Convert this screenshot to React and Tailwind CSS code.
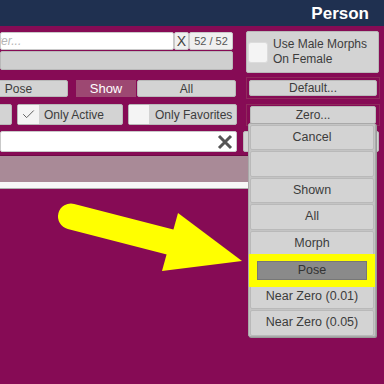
import { Check } from 'lucide-react';

const btn = 'flex items-center justify-center bg-[#d3d3d3] border border-[#b9b9b9] rounded-[2px] text-[#3c3c3c]';

function MenuItem({ label }) {
  return (
    <div className="h-[26.5px] px-[1px] py-[0.5px]">
      <div className={`${btn} h-full w-full text-[12.5px]`}>{label}</div>
    </div>
  );
}

export default function App() {
  const items = ['Cancel', '', 'Shown', 'All', 'Morph', 'Pose', 'Near Zero (0.01)', 'Near Zero (0.05)'];

  return (
    <div className="relative w-[384px] h-[384px] overflow-hidden bg-[#860b55] font-['Liberation_Sans',Arial,sans-serif] text-[12px] text-[#3c3c3c]">
      <div className="h-[26px] bg-[#1f3050] flex items-center justify-end pr-[15px]">
        <span className="text-white font-bold text-[17px] leading-none">Person</span>
      </div>

      <div className="flex">
        {/* left column */}
        <div className="w-[243px] flex flex-col pt-[6px]">
          <div className="flex h-[18px] w-[233px]">
            <div className="flex-1 bg-white border border-[#c9c9c9] rounded-[2px] flex items-center overflow-hidden">
              <span className="ml-[-16px] italic text-[#b4b4b4] whitespace-nowrap">Filter...</span>
            </div>
            <div className="w-[15px] bg-[#f0f0f0] border border-[#c9c9c9] rounded-[2px] flex items-center justify-center text-[14px] text-[#444]">X</div>
            <div className="w-[44px] bg-[#f0f0f0] border border-[#c9c9c9] rounded-[2px] flex items-center justify-center text-[11px] text-[#555]">52 / 52</div>
          </div>
          <div className="mt-[1px] h-[19px] w-[233px] bg-[#cfcfcf] border border-[#b9b9b9] rounded-[2px]" />

          <div className="mt-[10px] flex h-[17px]">
            <div className={`${btn} shrink-0 ml-[-31px] w-[99px]`}>Pose</div>
            <div className="shrink-0 ml-[8px] w-[60px] bg-[#9d4872] flex items-center justify-center text-white text-[13px]">Show</div>
            <div className={`${btn} shrink-0 ml-[1px] w-[99px]`}>All</div>
          </div>

          <div className="mt-[7px] flex h-[21px]">
            <div className={`${btn} shrink-0 ml-[-94px] w-[106px]`} />
            <div className="shrink-0 ml-[5px] w-[106px] flex bg-[#d3d3d3] border border-[#b9b9b9] rounded-[2px]">
              <div className="w-[21px] bg-[#f4f4f4] flex items-center justify-center">
                <Check size={15} strokeWidth={1.5} color="#555" />
              </div>
              <span className="ml-[5px] self-center text-[12px]">Only Active</span>
            </div>
            <div className="shrink-0 ml-[5px] w-[109px] flex bg-[#d3d3d3] border border-[#b9b9b9] rounded-[2px]">
              <div className="w-[20px] bg-[#f4f4f4]" />
              <span className="ml-[6px] self-center text-[12px]">Only Favorites</span>
            </div>
          </div>

          <div className="mt-[6px] h-[21px] w-[237px] bg-white border border-[#c9c9c9] rounded-[2px] flex items-center justify-end pr-[3px]">
            <svg width="16" height="16" viewBox="0 0 16 16">
              <path d="M2 2 L14 14 M14 2 L2 14" stroke="#555" strokeWidth="3" />
            </svg>
          </div>
        </div>

        {/* right column */}
        <div className="flex flex-col pt-[5px]">
          <div className="ml-[3px] w-[133px] h-[42px] flex items-center bg-[#d3d3d3] border border-[#b9b9b9] rounded-[2px]">
            <div className="ml-[1px] w-[20px] h-[21px] bg-[#f4f4f4] rounded-[3px] border border-[#dcdcdc]" />
            <span className="ml-[5px] leading-[15px] text-[12px]">Use Male Morphs<br />On Female</span>
          </div>
          <div className="mt-[4px] ml-[3px] w-[134px] h-[22px] border border-[#8f2a5c] px-[2px] py-[2px]">
            <div className={`${btn} h-full`}>Default...</div>
          </div>
          <div className="mt-[5px] ml-[3px] w-[134px] h-[22px] border border-[#8f2a5c] px-[3px] py-[1px]">
            <div className={`${btn} h-full`}>Zero...</div>
          </div>
          <div className={`${btn} mt-[5px] w-[136px] h-[21px]`} />
        </div>
      </div>

      <div className="mt-[3px] w-[248px] h-[27px] bg-[#a98a97] border-t border-[#6e0a45]" />
      <div className="w-[248px] h-[6px] bg-[#f7f7f7]" />
      <div className="w-[248px] h-[1px] bg-[#b0b0b0]" />

      {/* dropdown menu */}
      <div className="absolute left-[248px] top-[123px] w-[128px] bg-[#c4c4c4] border border-[#a9a9a9] rounded-[2px] shadow-[1px_1px_0_#9a9a9a]">
        {items.map((it, i) => (
          <MenuItem key={i} label={it} />
        ))}
      </div>

      {/* highlight frame */}
      <div className="absolute left-[249px] top-[254px] w-[126px] h-[33px] border-[7px] border-[#ffff00] bg-[#ffff00]">
        <div className="mx-[1px] h-full bg-[#8a8a8a] border border-[#777] flex items-center justify-center text-[12.5px] text-[#333]">Pose</div>
      </div>

      {/* arrow */}
      <svg className="absolute inset-0 pointer-events-none" width="384" height="384" viewBox="0 0 384 384">
        <line x1="71" y1="216.5" x2="172" y2="242.5" stroke="#ffff00" strokeWidth="26" strokeLinecap="round" />
        <polygon points="178,213 242,261 162,271" fill="#ffff00" />
      </svg>
    </div>
  );
}
